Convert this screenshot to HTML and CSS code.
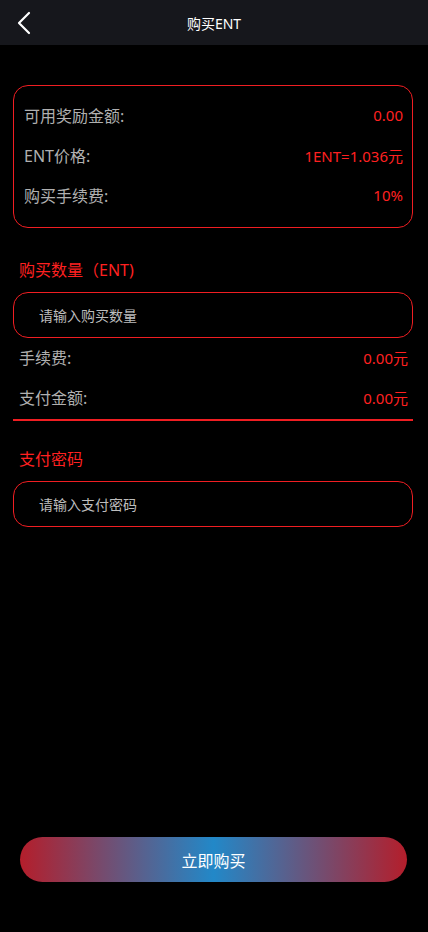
FILE: index.html
```html
<!DOCTYPE html>
<html lang="zh">
<head>
<meta charset="utf-8">
<title>购买ENT</title>
<link rel="stylesheet" href="styles.css">
</head>
<body>
<div class="page">
  <header class="topbar">
    <svg class="back" width="16" height="24" viewBox="0 0 16 24"><path d="M13 2 L3 12 L13 22" fill="none" stroke="#fff" stroke-width="2.2" stroke-linecap="round" stroke-linejoin="round"/></svg>
    <div class="title">购买ENT</div>
  </header>
  <main class="content">
    <section class="card">
      <div class="row"><span class="label">可用奖励金额:</span><span class="val">0.00</span></div>
      <div class="row"><span class="label">ENT价格:</span><span class="val">1ENT=1.036元</span></div>
      <div class="row"><span class="label">购买手续费:</span><span class="val">10%</span></div>
    </section>
    <div class="sec-title">购买数量（ENT)</div>
    <div class="input-box"><span class="ph">请输入购买数量</span></div>
    <div class="info">
      <div class="irow"><span class="label">手续费:</span><span class="val">0.00元</span></div>
      <div class="irow"><span class="label">支付金额:</span><span class="val">0.00元</span></div>
    </div>
    <div class="divider"></div>
    <div class="sec-title pw">支付密码</div>
    <div class="input-box"><span class="ph">请输入支付密码</span></div>
  </main>
  <div class="btn-wrap"><button class="buy">立即购买</button></div>
</div>
</body>
</html>
```
FILE: styles.css
```css
* { box-sizing: border-box; }
html, body { margin: 0; padding: 0; background: #000; }
body {
  width: 428px; height: 932px; overflow: hidden;
  font-family: "Noto Sans", "Noto Sans CJK SC", sans-serif;
  color: #b0b0b0;
}
.page { display: flex; flex-direction: column; height: 932px; }
.topbar {
  height: 45px; background: #16171c; position: relative;
  display: flex; align-items: center; justify-content: center;
}
.back { position: absolute; left: 16px; top: 11px; }
.title { color: #fff; font-size: 14px; }
.content { padding: 40px 15px 0 13px; display: flex; flex-direction: column; }
.card {
  width: 400px;
  border: 1px solid #f01e22; border-radius: 15px;
  padding: 18px 9px 21px 10px;
  display: flex; flex-direction: column; gap: 18px;
}
.row { display: flex; justify-content: space-between; align-items: center; height: 22px; }
.label { color: #b0b0b0; font-size: 16px; }
.val { color: #ff2020; font-size: 15px; }
.sec-title { color: #ff2020; font-size: 16px; margin: 31px 0 0 6px; line-height: 22px; }
.sec-title.pw { margin-top: 27px; }
.input-box {
  width: 400px; height: 46px; margin-top: 11px;
  border: 1px solid #f01e22; border-radius: 15px;
  display: flex; align-items: center; padding-left: 25px;
}
.ph { color: #bdbdbd; font-size: 14px; }
.info { display: flex; flex-direction: column; gap: 18px; padding: 8px 5px 0 6px; width: 400px; }
.irow { display: flex; justify-content: space-between; align-items: center; height: 22px; }
.divider { width: 400px; height: 2px; background: #f01e22; margin-top: 11px; }
.btn-wrap { margin-top: auto; padding: 0 21px 50px 20px; }
.buy {
  width: 387px; height: 45px; border: none; border-radius: 23px;
  background: linear-gradient(90deg, #b41e2b 0%, #2288c8 50%, #b41e2b 100%);
  color: #fff; font-size: 16px; font-family: "Noto Sans CJK SC", sans-serif;
}
```
